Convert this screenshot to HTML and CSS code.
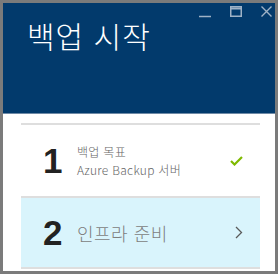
FILE: index.html
```html
<!DOCTYPE html>
<html lang="ko">
<head>
    <meta charset="UTF-8">
    <title>백업 시작</title>
    <link rel="stylesheet" href="styles.css">
</head>
<body>
    <div class="blade">
        <div class="header">
            <div class="controls">
                <svg width="12" height="12" viewBox="0 0 12 12"><path d="M0 10.5h12" stroke="#9fb2c6" stroke-width="1.5"/></svg>
                <svg width="12" height="11" viewBox="0 0 12 11"><rect x="0.75" y="0.75" width="10.5" height="9.5" fill="none" stroke="#9fb2c6" stroke-width="1.5"/><path d="M0 2.5h12" stroke="#9fb2c6" stroke-width="2"/></svg>
                <svg width="11" height="11" viewBox="0 0 11 11"><path d="M0.5 0.5l10 10M10.5 0.5l-10 10" stroke="#9fb2c6" stroke-width="1.4"/></svg>
            </div>
            <h1>백업 시작</h1>
        </div>

        <div class="content">
            <div class="step done">
                <div class="num">1</div>
                <div class="text">
                    <div class="title">백업 목표</div>
                    <div class="sub">Azure Backup 서버</div>
                </div>
                <svg class="icon" width="13" height="10" viewBox="0 0 13 10"><path d="M1 5l3.5 3.5L12 1" fill="none" stroke="#7fba00" stroke-width="2.2"/></svg>
            </div>
            <div class="step active">
                <div class="num">2</div>
                <div class="text">
                    <div class="big">인프라 준비</div>
                </div>
                <svg class="icon" width="8" height="13" viewBox="0 0 8 13"><path d="M1 1l5.5 5.5L1 12" fill="none" stroke="#5a5a5a" stroke-width="1.3"/></svg>
            </div>
        </div>
    </div>
</body>
</html>
```

FILE: styles.css
```css
body { margin: 0; background: #fff; font-family: "Noto Sans CJK KR", "Noto Sans", sans-serif; }
.blade { width: 278px; height: 274px; box-sizing: border-box; border: 3px solid #7b7b7b; background: #fff; }
.header { position: relative; height: 111px; background: #023a6c; border-bottom: 1px solid #6f8aa6; padding: 17px 0 0 24px; box-sizing: border-box; }
.header h1 { margin: 0; font-size: 30px; font-weight: 300; line-height: 1; color: #fff; letter-spacing: 1px; }
.controls { position: absolute; top: 3px; right: 3px; display: flex; gap: 19px; align-items: flex-start; }
.content { padding: 9px 15px 0 18px; }
.step { display: flex; align-items: center; padding: 0 17px 0 22px; border-top: 2px solid #dedede; }
.step.done { height: 71px; }
.step.active { height: 69px; background: #d9f4fc; border-bottom: 2px solid #dedede; }
.num { width: 34px; font-family: "Liberation Sans", sans-serif; font-size: 35px; font-weight: bold; color: #222; line-height: 1; }
.text { flex: 1; }
.title, .sub { font-size: 12px; line-height: 18px; color: #666; font-weight: 300; letter-spacing: 0.3px; }
.big { font-size: 18px; color: #7d7d7d; font-weight: 300; letter-spacing: 0.5px; }
.icon { display: block; }
```
